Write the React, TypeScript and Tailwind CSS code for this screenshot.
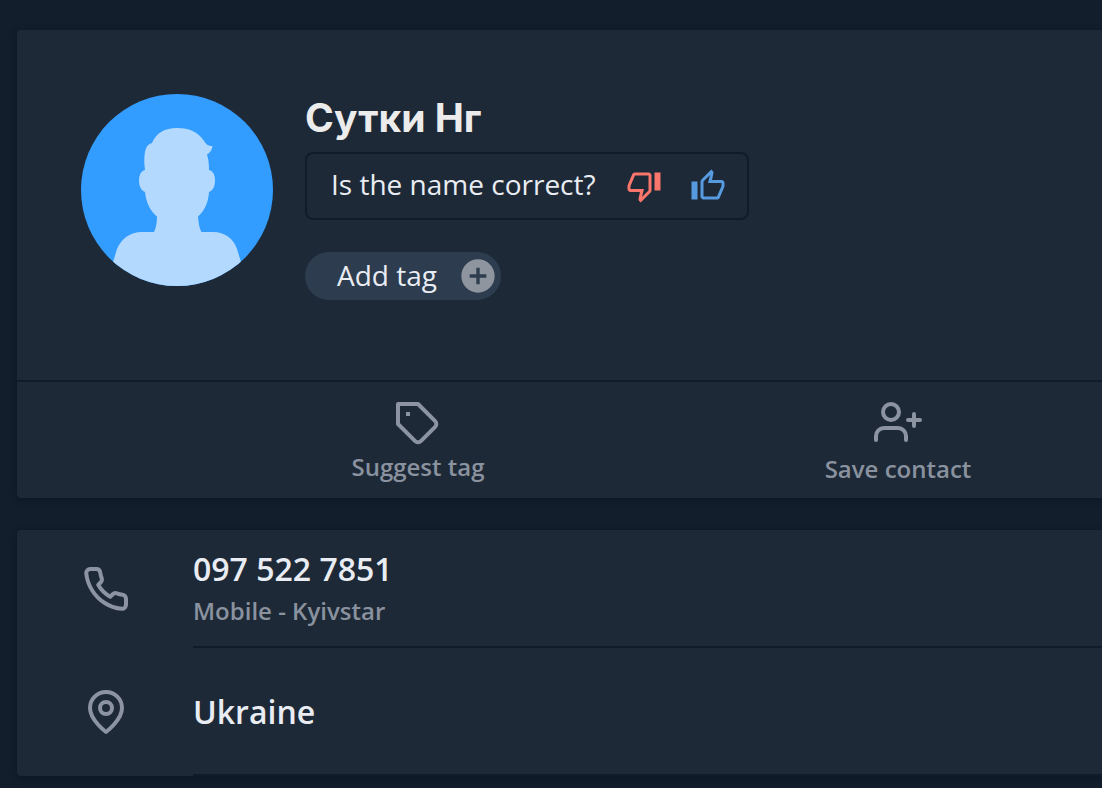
import type { ReactNode } from "react";
import { MdAddCircle, MdOutlineThumbDown, MdOutlineThumbUp } from "react-icons/md";

function LineIcon({ children }: { children: ReactNode }) {
  return (
    <svg
      viewBox="0 0 24 24"
      className="size-12 shrink-0 text-[#8b94a0]"
      fill="none"
      stroke="currentColor"
      strokeWidth="2"
      strokeLinecap="round"
      strokeLinejoin="round"
      aria-hidden="true"
    >
      {children}
    </svg>
  );
}

function Avatar() {
  return (
    <svg viewBox="0 0 192 192" className="size-48 shrink-0 rounded-full bg-[#329dff]" role="img" aria-label="Contact photo">
      <path
        fill="#b3d9ff"
        d="M96 34C109 34 117 38 123 47C125 50 127 52 131.500 52C131 56 129 59 126 60.500C127.500 65 128 70 128 76C132 77 134 81 134 86.500C134 92 132 96.500 128 98C127.500 108 123.500 117 117 122.500C117.500 128 118 134 120.500 138H132C144 138 153 145 156 155L160 168V192H32V168L36 155C40 145 49 138 61 138H73C75 134 76 128 76 122.500C69 117 65 108 64 98C60 96.500 58 92 58 86.500C58 81 60 77 64 76C63 69 63 63 64 58C65 53 67 50 71 49C75 39 84 34 96 34Z"
      />
    </svg>
  );
}

function Action({ icon, label, space }: { icon: ReactNode; label: string; space: string }) {
  return (
    <button type="button" className={`flex w-[480px] shrink-0 flex-col items-center text-2xl font-semibold text-[#89929e] ${space}`}>
      {icon}
      <span>{label}</span>
    </button>
  );
}

function InfoRow({ icon, children }: { icon: ReactNode; children: ReactNode }) {
  return (
    <li className="flex items-stretch gap-[63px] pl-[65px]">
      <div className="flex items-center">{icon}</div>
      <div className="flex min-w-0 flex-1 flex-col justify-center border-b-2 border-[#101c2a]">{children}</div>
    </li>
  );
}

export default function App() {
  return (
    <main className="flex min-h-screen flex-col gap-8 overflow-x-clip bg-[#121e2c] pt-[30px] pb-3 pl-[17px] font-['Open_Sans',sans-serif] text-[#e9edf3]">
      <section className="rounded-l bg-[#1e2937] shadow-[0_2px_6px_rgba(8,16,28,0.5)]">
        <div className="flex gap-8 px-16 pt-16 pb-20">
          <Avatar />
          <div className="flex flex-col items-start">
            <h1 className="mt-px mb-[11px] font-['Inter',sans-serif] text-[39px] leading-[46px] font-bold text-[#ececec]">Сутки Нг</h1>
            <div className="flex h-[68px] items-center rounded-lg border-2 border-[#121c29] pr-[21px] pl-6">
              <p className="mr-[30px] pb-1 text-[28px] leading-9">Is the name correct?</p>
              <button type="button" aria-label="Name is wrong" className="mr-7 text-[#f8766b]">
                <MdOutlineThumbDown className="size-9" />
              </button>
              <button type="button" aria-label="Name is right" className="text-[#569ae0]">
                <MdOutlineThumbUp className="size-9" />
              </button>
            </div>
            <button type="button" className="mt-8 flex h-12 items-center gap-[21px] rounded-full bg-[#2d3c4e] pr-[3px] pl-8 text-[28px] leading-9">
              <span className="pb-0.5">Add tag</span>
              <MdAddCircle className="size-10 text-[#8f959e]" />
            </button>
          </div>
        </div>
        <div className="flex h-[118px] items-start overflow-hidden border-t-2 border-[#101c2a] pl-[161px]">
          <Action
            label="Suggest tag"
            space="pt-[18px] gap-[3px]"
            icon={
              <LineIcon>
                <path d="M20.59 13.41l-7.17 7.17a2 2 0 0 1-2.83 0L2 12V2h10l8.59 8.59a2 2 0 0 1 0 2.82z" />
                <path d="M6 6h2v2H6z" fill="currentColor" stroke="none" />
              </LineIcon>
            }
          />
          <Action
            label="Save contact"
            space="pt-4 gap-[7px]"
            icon={
              <LineIcon>
                <circle cx="8.5" cy="7" r="4" />
                <path d="M16 21v-2a4 4 0 0 0-4-4H5a4 4 0 0 0-4 4v2M20 8v6M23 11h-6" />
              </LineIcon>
            }
          />
        </div>
      </section>

      <ul className="grid grid-rows-[118px_128px] rounded-l bg-[#1e2937] shadow-[0_2px_6px_rgba(8,16,28,0.5)]">
        <InfoRow
          icon={
            <LineIcon>
              <path d="M22 16.92v3a2 2 0 0 1-2.18 2 19.79 19.79 0 0 1-8.63-3.07 19.5 19.5 0 0 1-6-6 19.79 19.79 0 0 1-3.07-8.67A2 2 0 0 1 4.11 2h3a2 2 0 0 1 2 1.72 12.84 12.84 0 0 0 .7 2.81 2 2 0 0 1-.45 2.11L8.09 9.91a16 16 0 0 0 6 6l1.27-1.27a2 2 0 0 1 2.11-.45 12.84 12.84 0 0 0 2.81.7A2 2 0 0 1 22 16.92z" />
            </LineIcon>
          }
        >
          <a href="tel:+380975227851" className="text-[32px] leading-10 font-semibold">097 522 7851</a>
          <span className="mt-1.5 text-2xl font-semibold text-[#89929e]">Mobile - Kyivstar</span>
        </InfoRow>
        <InfoRow
          icon={
            <LineIcon>
              <path d="M20 10c0 6-8 12-8 12s-8-6-8-12a8 8 0 0 1 16 0z" />
              <circle cx="12" cy="10" r="3" />
            </LineIcon>
          }
        >
          <span className="pt-0.5 text-[32px] leading-10 font-semibold">Ukraine</span>
        </InfoRow>
      </ul>
    </main>
  );
}
